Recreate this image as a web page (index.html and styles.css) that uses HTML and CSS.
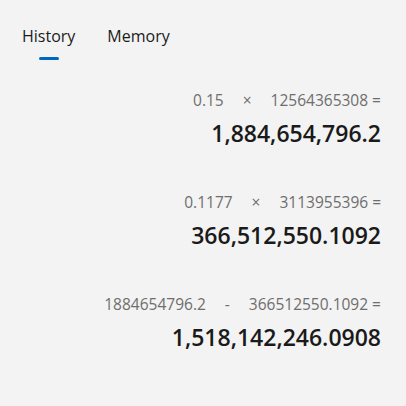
FILE: index.html
```html
<!DOCTYPE html>
<html lang="en">
<head>
    <meta charset="UTF-8">
    <title>Calculator History</title>
    <link rel="stylesheet" href="styles.css">
</head>
<body>
    <div class="pane">
        <div class="tabs">
            <div class="tab active">History</div>
            <div class="tab">Memory</div>
        </div>

        <ul class="history">
            <li class="entry">
                <div class="expr"><span>0.15</span><span>×</span><span>12564365308 =</span></div>
                <div class="result">1,884,654,796.2</div>
            </li>
            <li class="entry">
                <div class="expr"><span>0.1177</span><span>×</span><span>3113955396 =</span></div>
                <div class="result">366,512,550.1092</div>
            </li>
            <li class="entry">
                <div class="expr"><span>1884654796.2</span><span>-</span><span>366512550.1092 =</span></div>
                <div class="result">1,518,142,246.0908</div>
            </li>
        </ul>
    </div>
</body>
</html>
```

FILE: styles.css
```css
html, body { margin: 0; height: 100%; }
body { background: #f3f3f3; font-family: "Open Sans", "Noto Sans", sans-serif; color: #1a1a1a; }
.pane { padding: 22px 25px 0 22px; }

/* Tabs */
.tabs { display: flex; gap: 32px; }
.tab { position: relative; font-size: 16px; line-height: 28px; color: #1b1b1b; }
.tab.active::after {
    content: "";
    position: absolute;
    left: 50%;
    bottom: -10px;
    width: 20px;
    height: 3px;
    margin-left: -10px;
    border-radius: 2px;
    background: #0067c0;
}

/* History list */
.history { list-style: none; margin: 40px 0 0; padding: 0; }
.entry { text-align: right; margin-bottom: 39px; }
.expr { display: flex; justify-content: flex-end; gap: 19px; font-size: 15.5px; line-height: 20px; color: #6e6e6e; }
.result { margin-top: 3px; font-size: 23px; font-weight: 600; line-height: 40px; color: #1a1a1a; }
```
